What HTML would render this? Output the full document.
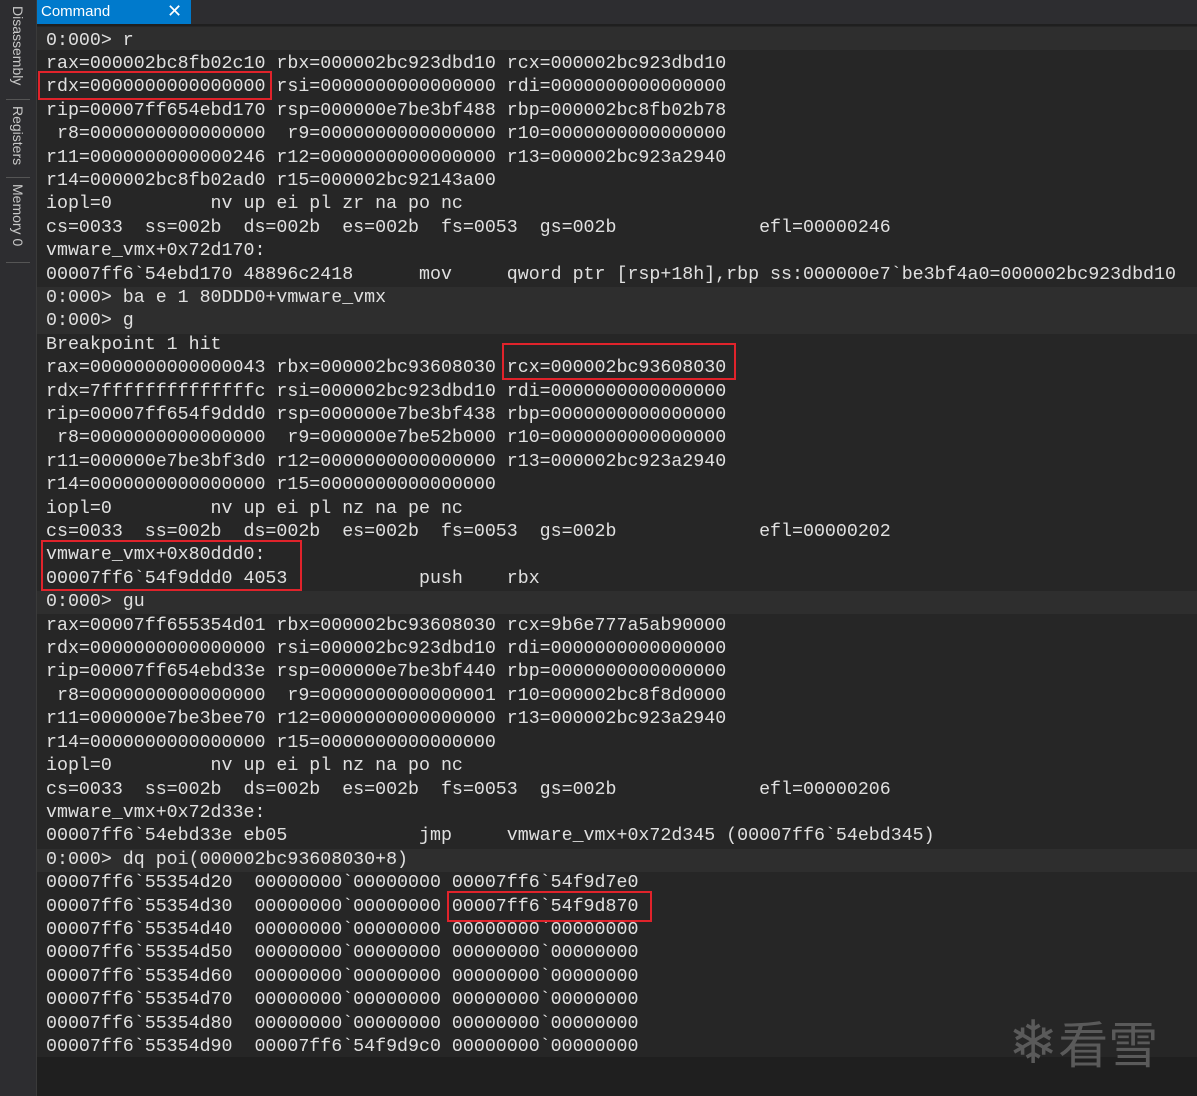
<!DOCTYPE html>
<html><head><meta charset="utf-8"><style>
body{margin:0;width:1197px;height:1096px;background:#1f1f1f;overflow:hidden;position:relative;font-family:"Liberation Sans",sans-serif}
#side{position:absolute;left:0;top:0;width:36px;height:1096px;background:#2d2d30;border-right:1px solid #3a3a3a}
.vt{position:absolute;left:10px;color:#c8c8c8;font-size:14px;writing-mode:vertical-rl;white-space:nowrap}
.sep{position:absolute;left:6px;width:24px;height:1px;background:#555}
#top{position:absolute;left:37px;top:0;width:1160px;height:24px;background:#2d2d30}
#tab{position:absolute;left:37px;top:0;width:154px;height:24px;background:#007acc;color:#fff;font-size:15px;line-height:23px}
#tab span{position:absolute;left:4px}
#tab i{position:absolute;left:130px;top:0;font-style:normal;font-size:18px}
#con{position:absolute;left:37px;top:26px;width:1160px;height:1031px;background:#262626}
pre{margin:0;position:absolute;left:46px;top:29.5px;font-family:"Liberation Mono",monospace;font-size:18.3px;line-height:23.4px;color:#e0e0e0}
.hl{position:absolute;left:37px;width:1160px;height:23.4px;background:#2e2e2e}
.rb{position:absolute;border:2px solid #e0232b}
#wm{position:absolute;left:1008px;top:1008px;color:#5a5a5a;font-size:50px;font-family:"Noto Sans CJK SC",sans-serif;line-height:60px}
</style></head><body>
<div id="side">
<div class="vt" style="top:6px">Disassembly</div><div class="sep" style="top:99px"></div>
<div class="vt" style="top:106px">Registers</div><div class="sep" style="top:177px"></div>
<div class="vt" style="top:184px">Memory 0</div><div class="sep" style="top:262px"></div>
</div>
<div id="top"></div>
<div id="tab"><span>Command</span><i>✕</i></div>
<div id="con"></div>
<div class="hl" style="top:27px"></div>
<div class="hl" style="top:286.9px"></div>
<div class="hl" style="top:310.3px"></div>
<div class="hl" style="top:591.1px"></div>
<div class="hl" style="top:848.5px"></div>
<div id="wm"><span style="font-size:60px">❄</span>看雪</div>
<pre>0:000&gt; r
rax=000002bc8fb02c10 rbx=000002bc923dbd10 rcx=000002bc923dbd10
rdx=0000000000000000 rsi=0000000000000000 rdi=0000000000000000
rip=00007ff654ebd170 rsp=000000e7be3bf488 rbp=000002bc8fb02b78
 r8=0000000000000000  r9=0000000000000000 r10=0000000000000000
r11=0000000000000246 r12=0000000000000000 r13=000002bc923a2940
r14=000002bc8fb02ad0 r15=000002bc92143a00
iopl=0         nv up ei pl zr na po nc
cs=0033  ss=002b  ds=002b  es=002b  fs=0053  gs=002b             efl=00000246
vmware_vmx+0x72d170:
00007ff6`54ebd170 48896c2418      mov     qword ptr [rsp+18h],rbp ss:000000e7`be3bf4a0=000002bc923dbd10
0:000&gt; ba e 1 80DDD0+vmware_vmx
0:000&gt; g
Breakpoint 1 hit
rax=0000000000000043 rbx=000002bc93608030 rcx=000002bc93608030
rdx=7ffffffffffffffc rsi=000002bc923dbd10 rdi=0000000000000000
rip=00007ff654f9ddd0 rsp=000000e7be3bf438 rbp=0000000000000000
 r8=0000000000000000  r9=000000e7be52b000 r10=0000000000000000
r11=000000e7be3bf3d0 r12=0000000000000000 r13=000002bc923a2940
r14=0000000000000000 r15=0000000000000000
iopl=0         nv up ei pl nz na pe nc
cs=0033  ss=002b  ds=002b  es=002b  fs=0053  gs=002b             efl=00000202
vmware_vmx+0x80ddd0:
00007ff6`54f9ddd0 4053            push    rbx
0:000&gt; gu
rax=00007ff655354d01 rbx=000002bc93608030 rcx=9b6e777a5ab90000
rdx=0000000000000000 rsi=000002bc923dbd10 rdi=0000000000000000
rip=00007ff654ebd33e rsp=000000e7be3bf440 rbp=0000000000000000
 r8=0000000000000000  r9=0000000000000001 r10=000002bc8f8d0000
r11=000000e7be3bee70 r12=0000000000000000 r13=000002bc923a2940
r14=0000000000000000 r15=0000000000000000
iopl=0         nv up ei pl nz na po nc
cs=0033  ss=002b  ds=002b  es=002b  fs=0053  gs=002b             efl=00000206
vmware_vmx+0x72d33e:
00007ff6`54ebd33e eb05            jmp     vmware_vmx+0x72d345 (00007ff6`54ebd345)
0:000&gt; dq poi(000002bc93608030+8)
00007ff6`55354d20  00000000`00000000 00007ff6`54f9d7e0
00007ff6`55354d30  00000000`00000000 00007ff6`54f9d870
00007ff6`55354d40  00000000`00000000 00000000`00000000
00007ff6`55354d50  00000000`00000000 00000000`00000000
00007ff6`55354d60  00000000`00000000 00000000`00000000
00007ff6`55354d70  00000000`00000000 00000000`00000000
00007ff6`55354d80  00000000`00000000 00000000`00000000
00007ff6`55354d90  00007ff6`54f9d9c0 00000000`00000000</pre>
<div class="rb" style="left:38px;top:71px;width:230px;height:25px"></div>
<div class="rb" style="left:502px;top:343px;width:230px;height:33px"></div>
<div class="rb" style="left:41px;top:540px;width:257px;height:47px"></div>
<div class="rb" style="left:447px;top:891px;width:201px;height:27px"></div>
</body></html>
